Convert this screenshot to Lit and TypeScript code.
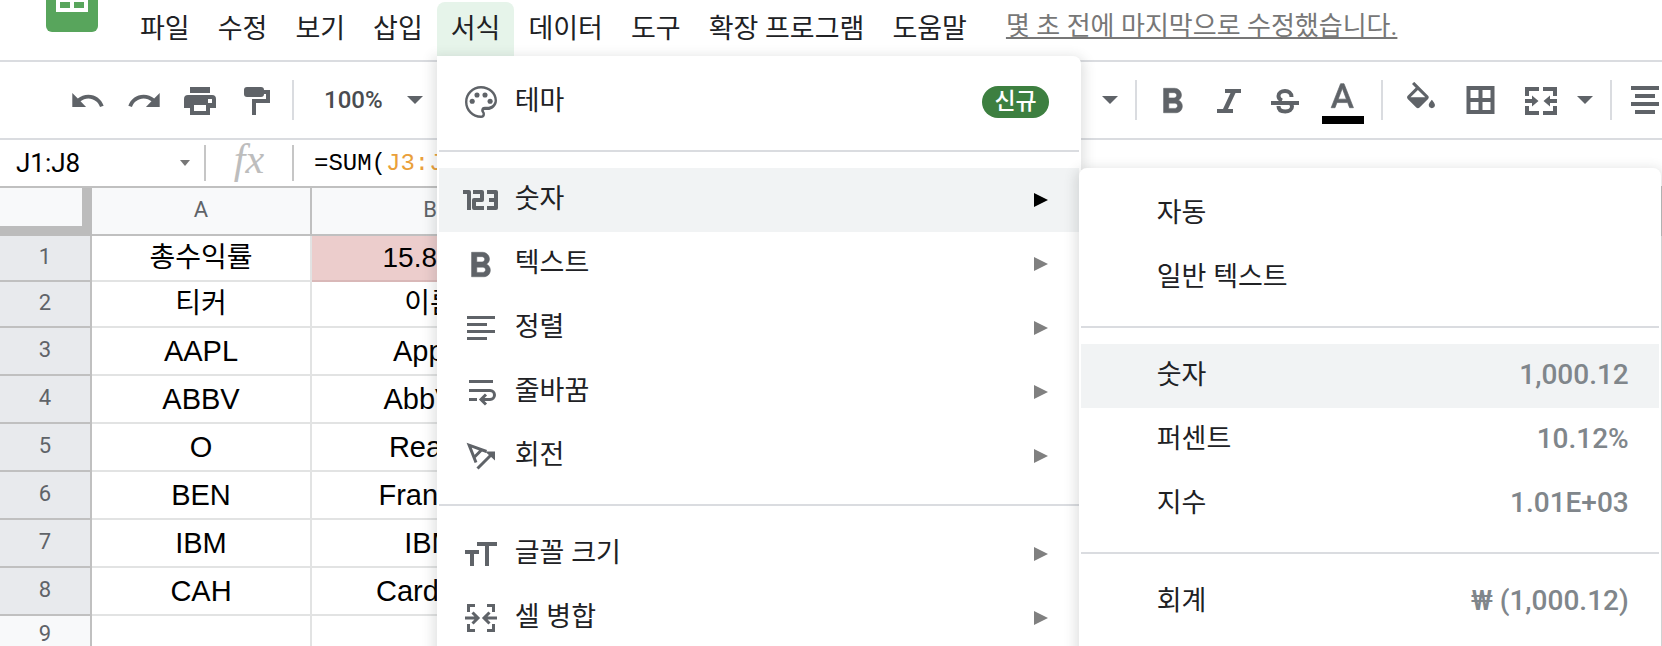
import { LitElement, html, css, svg, nothing } from "lit";
import { customElement, property } from "lit/decorators.js";

const boldPath = svg`<path d="M15.6 10.79c.97-.67 1.65-1.77 1.65-2.79 0-2.26-1.75-4-4-4H7v14h7.04c2.09 0 3.71-1.7 3.71-3.79 0-1.52-.86-2.82-2.15-3.42zM10 6.5h3c.83 0 1.5.67 1.5 1.5s-.67 1.5-1.5 1.5h-3v-3zm3.5 9H10v-3h3.5c.83 0 1.5.67 1.5 1.5s-.67 1.5-1.5 1.5z"/>`;
const undoPath = svg`<path d="M12.5 8c-2.65 0-5.05.99-6.9 2.6L2 7v9h9l-3.62-3.62c1.39-1.16 3.16-1.88 5.12-1.88 3.54 0 6.55 2.31 7.6 5.5l2.37-.78C21.08 11.03 17.15 8 12.5 8z"/>`;

const icons: Record<string, { box: string; body: unknown }> = {
  undo: { box: "0.5 -0.25 23.5 23.5", body: undoPath },
  redo: { box: "0 -0.25 23.5 23.5", body: svg`<g transform="translate(24 0) scale(-1 1)">${undoPath}</g>` },
  print: {
    box: "0 0 36 36",
    body: svg`<path fill-rule="evenodd" d="M8 5h20v6H8zM6 13h24a4 4 0 0 1 4 4v9h-6v7H8v-7H2v-9a4 4 0 0 1 4-4zM26 17v4h4v-4zM12 23v6h12v-6z"/>`,
  },
  paint: {
    box: "-1 0 36 36",
    body: svg`<rect x="5" y="5" width="20" height="10" rx="3"/><path d="M25 10h4v9H15v14" fill="none" stroke="currentColor" stroke-width="4"/>`,
  },
  bold: { box: "2.1 0.4 20.6 20.6", body: svg`<g stroke="currentColor" stroke-width=".3">${boldPath}</g>` },
  italic: { box: "0 0 36 36", body: svg`<path d="M14 7h16v4h-5.500l-7.500 16h5v4H6v-4h6l7.500-16H14z"/>` },
  strike: {
    box: "0 0 36 36",
    body: svg`<path d="M4 19h28v4H4z"/><path fill="none" stroke="currentColor" stroke-width="4" d="M24.500 15c0-4-3-6-6.500-6s-6.500 1.800-6.500 5c0 2 1 3.500 3.500 4.500M11.500 24c0 4 3 5.600 6.800 5.600s6.700-2 6.700-5c0-1.200-.4-2-1.200-2.800"/>`,
  },
  textColor: {
    box: "1.900 2 21 21",
    body: svg`<path stroke="currentColor" stroke-width=".4" d="M11 3L5.500 17h2.250l1.120-3h6.250l1.120 3h2.250L13 3h-2zm-1.380 9L12 5.670 14.380 12H9.620z"/>`,
  },
  fill: {
    box: "0.4 0.1 23.2 23.2",
    body: svg`<path d="M16.56 8.94L7.62 0 6.21 1.41l2.38 2.38-5.15 5.15c-.59.59-.59 1.54 0 2.12l5.5 5.5c.29.29.68.44 1.06.44s.77-.15 1.06-.44l5.5-5.5c.59-.58.59-1.53 0-2.12zM5.21 10L10 5.210 14.790 10H5.210zM19 11.500s-2 2.170-2 3.500c0 1.100.9 2 2 2s2-.9 2-2c0-1.330-2-3.500-2-3.500z"/>`,
  },
  borders: {
    box: "0.5 0 36 36",
    body: svg`<path fill="none" stroke="currentColor" stroke-width="4" d="M6 6h24v24H6zM18 6v24M6 18h24"/>`,
  },
  merge: {
    box: "0 0 36 36",
    body: svg`<path fill="none" stroke="currentColor" stroke-width="4" d="M16 7H4v7M20 7h12v7M16 31H4v-7M20 31h12v-7M2 19h8M34 19h-8"/><path d="M9 13.500l6.500 5.500L9 24.500zM27 13.500L20.500 19l6.500 5.500z"/>`,
  },
  alignCenter: { box: "1 0 36 36", body: svg`<path d="M6 4h28v4H6zM10 12h20v4H10zM6 20h28v4H6zM10 28h20v4H10z"/>` },
  palette: {
    box: "0.75 0.75 22.5 22.5",
    body: svg`<path d="M12 22C6.490 22 2 17.510 2 12S6.490 2 12 2s10 4.040 10 9c0 3.310-2.690 6-6 6h-1.770c-.28 0-.5.22-.5.5 0 .12.05.23.13.33.41.47.64 1.060.64 1.670A2.500 2.500 0 0 1 12 22zm0-18.500c-4.680 0-8.500 3.820-8.500 8.500s3.820 8.500 8.500 8.500c.55 0 1-.45 1-1 0-.3-.1-.5-.3-.8-.4-.4-.6-1-.6-1.600a2.300 2.300 0 0 1 2.300-2.100H16c2.480 0 4.500-2 4.500-4 0-4.140-3.820-7.500-8.500-7.500z"/><circle cx="6.500" cy="11.500" r="1.600"/><circle cx="9.500" cy="7.600" r="1.600"/><circle cx="14.500" cy="7.600" r="1.600"/><circle cx="17.700" cy="11.500" r="1.600"/>`,
  },
  number: {
    box: "0 0 36 36",
    body: svg`<path fill="none" stroke="currentColor" stroke-width="4" stroke-linejoin="round" d="M0 10h6v18M10 10h9v8h-8v8h10M24 10h9v16h-9M26 18h7"/>`,
  },
  alignLeft: { box: "0 0 36 36", body: svg`<path d="M4 6h28v3H4zM4 13h20v3H4zM4 20h28v3H4zM4 27h20v3H4z"/>` },
  wrap: {
    box: "0 0 36 36",
    body: svg`<path d="M6 6h24v3H6zM6 24h8v3H6z"/><path fill="none" stroke="currentColor" stroke-width="3" d="M6 16.500h21a4.500 4.500 0 0 1 0 9h-7"/><path fill="none" stroke="currentColor" stroke-width="3" d="M23 20.500l-5 5 5 5"/>`,
  },
  rotate: {
    box: "0 0 36 36",
    body: svg`<path fill="none" stroke="currentColor" stroke-width="3" d="M13 24.500L6.200 7.200 23.500 13.500M10.500 20l8.500-8.500M14.500 30.500L28 17"/><path d="M22 13.500h10v9z"/>`,
  },
  fontSize: { box: "0 0 36 36", body: svg`<path d="M14 6h20v4h-8v20h-4V10h-8zM2 14h14v4h-5v12H7V18H2z"/>` },
  mergeThin: {
    box: "0 0 36 36",
    body: svg`<path fill="none" stroke="currentColor" stroke-width="3" d="M12 5.500H5.500V12M24 5.500h6.500V12M12 30.500H5.500V24M24 30.500h6.500V24M2 18h12M34 18H22M9.500 12.500L15 18l-5.500 5.500M26.500 12.500L21 18l5.500 5.500"/>`,
  },
};

const icon = (name: string) => html`<svg class="icon" viewBox=${icons[name].box} aria-hidden="true">${icons[name].body}</svg>`;

interface MenuItem {
  label: string;
  icon?: string;
  badge?: string;
  value?: string;
  arrow?: boolean;
  active?: boolean;
  submenu?: MenuItem[][];
}

const numberFormats: MenuItem[][] = [
  [{ label: "자동" }, { label: "일반 텍스트" }],
  [
    { label: "숫자", value: "1,000.12", active: true },
    { label: "퍼센트", value: "10.12%" },
    { label: "지수", value: "1.01E+03" },
  ],
  [{ label: "회계", value: "₩ (1,000.12)" }],
];

const formatMenu: MenuItem[][] = [
  [{ label: "테마", icon: "palette", badge: "신규" }],
  [
    { label: "숫자", icon: "number", arrow: true, active: true, submenu: numberFormats },
    { label: "텍스트", icon: "bold", arrow: true },
    { label: "정렬", icon: "alignLeft", arrow: true },
    { label: "줄바꿈", icon: "wrap", arrow: true },
    { label: "회전", icon: "rotate", arrow: true },
  ],
  [
    { label: "글꼴 크기", icon: "fontSize", arrow: true },
    { label: "셀 병합", icon: "mergeThin", arrow: true },
  ],
];

const base = css`
  * {
    box-sizing: border-box;
  }
  button {
    margin: 0;
    padding: 0;
    border: 0;
    background: none;
    font: inherit;
    color: inherit;
    text-align: left;
  }
  .icon {
    display: block;
    flex: none;
    width: 36px;
    height: 36px;
    fill: currentColor;
  }
`;

@customElement("menu-panel")
export class MenuPanel extends LitElement {
  @property({ attribute: false }) groups: MenuItem[][] = [];

  static styles = [
    base,
    css`
      :host {
        display: block;
        padding: 14px 2px 32px;
        border-radius: 8px;
        background: #fff;
        box-shadow: 0 4px 12px 4px rgba(60, 64, 67, 0.15);
        color: #202124;
      }
      .group + .group {
        margin-top: 16px;
        padding-top: 16px;
        border-top: 2px solid #dadce0;
      }
      .entry {
        position: relative;
      }
      .item {
        display: flex;
        align-items: center;
        gap: 16px;
        width: 100%;
        height: 64px;
        padding: 0 30px 0 24px;
      }
      .item.plain {
        padding-left: 76px;
      }
      .item.active {
        background: #f1f3f4;
      }
      .icon {
        color: #5f6368;
      }
      .label {
        flex: 1;
        padding-bottom: 2px;
      }
      .value {
        padding-bottom: 2px;
        font-size: 28px;
        font-weight: 500;
        color: #80868b;
      }
      .badge {
        height: 32px;
        padding: 0 12px;
        border-radius: 16px;
        background: #3d7f40;
        color: #fff;
        font-size: 23px;
        line-height: 32px;
        font-weight: 500;
      }
      .arrow {
        width: 14px;
        height: 14px;
        margin-right: 1px;
        fill: #808080;
      }
      .active .arrow {
        fill: #000;
      }
      .submenu {
        position: absolute;
        top: 0;
        left: 100%;
        z-index: 1;
        width: 582px;
      }
    `,
  ];

  render() {
    return this.groups.map(
      (group) => html`<div class="group">
        ${group.map(
          (item) => html`<div class="entry">
            <button class="item ${item.icon ? "" : "plain"} ${item.active ? "active" : ""}" role="menuitem">
              ${item.icon ? icon(item.icon) : nothing}
              <span class="label">${item.label}</span>
              ${item.badge ? html`<span class="badge">${item.badge}</span>` : nothing}
              ${item.value ? html`<span class="value">${item.value}</span>` : nothing}
              ${item.arrow
                ? html`<svg class="arrow" viewBox="0 0 14 14" aria-hidden="true"><path d="M0 0l14 7-14 7z" /></svg>`
                : nothing}
            </button>
            ${item.submenu
              ? html`<menu-panel class="submenu" role="menu" .groups=${item.submenu}></menu-panel>`
              : nothing}
          </div>`
        )}
      </div>`
    );
  }
}

const rows: [string, string][] = [
  ["총수익률", "15.82%"],
  ["티커", "이름"],
  ["AAPL", "Apple"],
  ["ABBV", "AbbVie"],
  ["O", "Realty"],
  ["BEN", "Franklin"],
  ["IBM", "IBM"],
  ["CAH", "Cardinal"],
  ["", ""],
];

@customElement("app-root")
export class AppRoot extends LitElement {
  static styles = [
    base,
    css`
      :host {
        display: flex;
        flex-direction: column;
        height: 100vh;
        overflow: hidden;
        background: #fff;
        color: #202124;
        font-family: Roboto, "Noto Sans CJK KR", sans-serif;
        font-size: 27px;
        line-height: 36px;
      }
      .menubar {
        display: flex;
        flex: none;
        height: 62px;
        border-bottom: 2px solid #dadce0;
        white-space: nowrap;
      }
      .logo {
        flex: none;
        width: 52px;
        height: 32px;
        margin: 0 28px 0 46px;
      }
      .menu {
        position: relative;
        height: 54px;
        margin-top: 2px;
      }
      .menu > button {
        height: 100%;
        padding: 0 14px;
        border-radius: 8px 8px 0 0;
      }
      .menu.open > button {
        background: #e6f4ea;
      }
      .dropdown {
        position: absolute;
        top: 100%;
        left: 0;
        z-index: 2;
        width: 644px;
        border-radius: 0 8px 8px 8px;
      }
      .edited {
        align-self: flex-start;
        margin: 8px 0 0 25px;
        color: #777;
        font-size: 26px;
        text-decoration: underline;
        text-decoration-thickness: 2px;
        text-underline-offset: 2px;
      }
      .toolbar {
        display: flex;
        flex: none;
        align-items: center;
        justify-content: space-between;
        height: 78px;
        padding-left: 60px;
        border-bottom: 2px solid #dadce0;
        color: #5f6368;
        overflow: hidden;
      }
      .tools {
        display: flex;
        align-items: center;
        height: 100%;
      }
      .tool {
        display: flex;
        flex-direction: column;
        align-items: center;
        width: 56px;
      }
      .tool.wide {
        width: 60px;
      }
      .tool.edge {
        width: 42px;
        padding-left: 6px;
      }
      .swatch {
        width: 42px;
        height: 8px;
        margin: -2px 0 -6px;
        background: #000;
      }
      .sep {
        width: 2px;
        height: 40px;
        margin: 0 8px;
        background: #dadce0;
      }
      .zoom {
        display: flex;
        align-items: center;
        gap: 24px;
        padding-left: 22px;
        font-size: 24px;
        font-weight: 500;
        color: #4a4c50;
      }
      .caret {
        width: 16px;
        height: 8px;
        fill: #5f6368;
      }
      .drop {
        display: flex;
        padding: 0 9px 0 6px;
      }
      .formula-bar {
        display: flex;
        flex: none;
        align-items: center;
        height: 48px;
        border-bottom: 2px solid #c0c0c0;
        color: #000;
        font-size: 26px;
      }
      .name {
        width: 180px;
        padding: 0 0 0 16px;
        border: 0;
        background: none;
        font: inherit;
        color: inherit;
        outline: 0;
      }
      .name-caret {
        width: 10px;
        height: 6px;
        margin-right: 14px;
        fill: #777;
      }
      .line {
        width: 2px;
        height: 36px;
        background: #c6c6c6;
      }
      .fx {
        width: 86px;
        padding-bottom: 8px;
        text-align: center;
        font-family: "Liberation Serif", serif;
        font-style: italic;
        font-size: 42px;
        color: #bdbdbd;
      }
      .formula {
        padding: 2px 0 0 20px;
        font-family: "Liberation Mono", monospace;
        font-size: 24px;
      }
      .range {
        color: #eaa03a;
      }
      table {
        flex: none;
        width: 100%;
        table-layout: fixed;
        border-collapse: separate;
        border-spacing: 0;
        color: #000;
      }
      th,
      td {
        height: 48px;
        padding: 0;
        border: 0 solid #e2e3e3;
        border-width: 0 2px 2px 0;
        text-align: center;
        font-weight: 400;
        white-space: nowrap;
        overflow: hidden;
      }
      td {
        font-family: "Liberation Sans", "Noto Sans CJK KR", sans-serif;
        font-size: 29px;
        line-height: 32px;
      }
      th {
        padding-bottom: 2px;
        border-color: #c0c0c0;
        background: #f8f9fa;
        color: #5f6368;
        font-size: 22px;
        line-height: 28px;
      }
      .corner {
        border-color: #bcbcbc;
        border-width: 0 10px 10px 0;
      }
      .korean th,
      .korean td {
        height: 46px;
      }
      .korean td {
        font-size: 28px;
      }
      .last th,
      .last td {
        height: 40px;
      }
      .selected th {
        background: #e8eaed;
      }
      td.loss {
        border-color: #d9b8b8;
        background: #eccdcc;
      }
      .row-col {
        width: 92px;
      }
      .col-a {
        width: 220px;
      }
      .col-b {
        width: 238px;
      }
    `,
  ];

  private menu(label: string) {
    return html`<div class="menu"><button>${label}</button></div>`;
  }

  private tool(name: string, label: string, extra = "") {
    return html`<button class="tool ${extra}" aria-label=${label}>${icon(name)}</button>`;
  }

  private caret(cls = "caret") {
    return html`<svg class=${cls} viewBox="0 0 16 8" preserveAspectRatio="none" aria-hidden="true">
      <path d="M0 0h16L8 8z" />
    </svg>`;
  }

  private rowClass(i: number) {
    return `${i < 2 ? "korean" : ""} ${i < 8 ? "selected" : "last"}`;
  }

  render() {
    return html`
      <nav class="menubar">
        <svg class="logo" viewBox="0 0 52 32" aria-hidden="true">
          <path fill="#58a55c" d="M0 0h52v26a6 6 0 0 1-6 6H6a6 6 0 0 1-6-6z" />
          <path fill="#fff" fill-rule="evenodd" d="M10 0h32v12H10zM14 2v6h10V2zM28 2v6h10V2z" />
        </svg>
        ${["파일", "수정", "보기", "삽입"].map((m) => this.menu(m))}
        <div class="menu open">
          <button aria-expanded="true">서식</button>
          <menu-panel class="dropdown" role="menu" .groups=${formatMenu}></menu-panel>
        </div>
        ${["데이터", "도구", "확장 프로그램", "도움말"].map((m) => this.menu(m))}
        <a class="edited" href="#history">몇 초 전에 마지막으로 수정했습니다.</a>
      </nav>

      <div class="toolbar" role="toolbar">
        <div class="tools">
          ${this.tool("undo", "실행취소")} ${this.tool("redo", "재실행")} ${this.tool("print", "인쇄")}
          ${this.tool("paint", "서식 복사")}
          <span class="sep"></span>
          <button class="zoom">100% ${this.caret()}</button>
        </div>
        <div class="tools">
          <button class="drop" aria-label="글꼴 크기">${this.caret()}</button>
          <span class="sep"></span>
          ${this.tool("bold", "굵게")} ${this.tool("italic", "기울임꼴")} ${this.tool("strike", "취소선")}
          <button class="tool wide" aria-label="텍스트 색상">${icon("textColor")}<span class="swatch"></span></button>
          <span class="sep"></span>
          ${this.tool("fill", "채우기 색상", "wide")} ${this.tool("borders", "테두리", "wide")}
          ${this.tool("merge", "셀 병합", "wide")}
          <button class="drop" aria-label="병합 유형 선택">${this.caret()}</button>
          <span class="sep"></span>
          ${this.tool("alignCenter", "가로 맞춤", "edge")}
        </div>
      </div>

      <div class="formula-bar">
        <input class="name" aria-label="이름 상자" value="J1:J8" />
        ${this.caret("name-caret")}
        <span class="line"></span>
        <span class="fx">fx</span>
        <span class="line"></span>
        <span class="formula">=SUM(<span class="range">J3:J8</span>)</span>
      </div>

      <table>
        <colgroup>
          <col class="row-col" />
          <col class="col-a" />
          <col class="col-b" />
          <col />
        </colgroup>
        <thead>
          <tr>
            <th class="corner"></th>
            <th scope="col">A</th>
            <th scope="col">B</th>
            <th></th>
          </tr>
        </thead>
        <tbody>
          ${rows.map(
            ([a, b], i) => html`<tr class=${this.rowClass(i)}>
              <th scope="row">${i + 1}</th>
              <td>${a}</td>
              <td class=${i === 0 ? "loss" : ""}>${b}</td>
              <td></td>
            </tr>`
          )}
        </tbody>
      </table>
    `;
  }
}
